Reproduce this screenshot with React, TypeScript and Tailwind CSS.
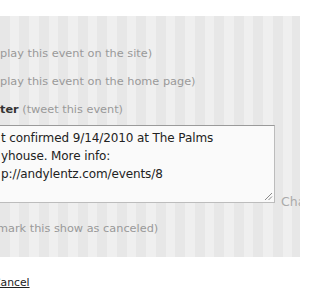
export default function App() {
  return (
    <div className="h-[300px] w-[300px] overflow-hidden bg-white font-['Lucida_Grande','DejaVu_Sans',sans-serif] text-[#333]">
      <div className="h-[16px]" />

      {/* striped form panel */}
      <div className="h-[241px] bg-[repeating-linear-gradient(90deg,#e7e7e7_0px,#e7e7e7_9.75px,#efefef_9.75px,#efefef_19.5px)]">
        <div className="pt-[31px] text-[11.3px] leading-[14px] text-[#999]">
          <p className="whitespace-nowrap">play this event on the site)</p>
          <p className="mt-[14px] whitespace-nowrap">play this event on the home page)</p>
          <p className="mt-[14px] whitespace-nowrap">
            <span className="font-bold text-[#333]">ter</span> (tweet this event)
          </p>
        </div>

        <div className="mt-[8px] flex items-end gap-[6px]">
          <div className="relative -ml-[10px] h-[78px] w-[285px] shrink-0 border border-[#bcbcbc] border-t-[#9a9a9a] bg-[#fafafa] pl-[10px] pt-[3px] text-[12px] leading-[18px] tracking-[-0.1px] text-[#222]">
            <p className="whitespace-nowrap">t confirmed 9/14/2010 at The Palms</p>
            <p className="whitespace-nowrap">yhouse. More info:</p>
            <p className="whitespace-nowrap">p://andylentz.com/events/8</p>
            <svg className="absolute bottom-[1px] right-[1px]" width="9" height="9" viewBox="0 0 9 9">
              <path d="M1 8 L8 1 M4.5 8 L8 4.5" stroke="#8a8a8a" strokeWidth="1" fill="none" />
            </svg>
          </div>
          <span className="mb-[-6px] whitespace-nowrap text-[12.5px] leading-[14px] text-[#aaa]">Characters left: 140</span>
        </div>

        <p className="-ml-[3px] mt-[19px] whitespace-nowrap text-[11.3px] leading-[14px] text-[#999]">
          mark this show as canceled)
        </p>
      </div>

      <div className="pt-[12px]">
        <a href="#" className="-ml-[7px] text-[10.8px] leading-[14px] text-[#222] underline">
          Cancel
        </a>
      </div>
    </div>
  );
}
